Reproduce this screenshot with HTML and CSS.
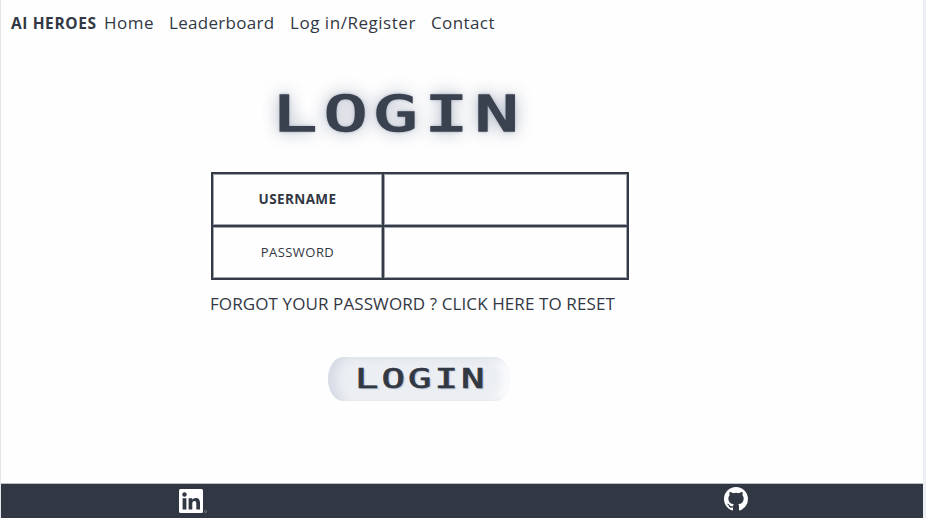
FILE: index.html
```html
<!DOCTYPE html>
<html lang="en">
<head>
<meta charset="utf-8">
<title>AI Heroes</title>
<link rel="stylesheet" href="styles.css">
</head>
<body>
<header class="nav">
  <a class="brand">AI HEROES</a>
  <a class="link home">Home</a>
  <a class="link board">Leaderboard</a>
  <a class="link register">Log in/Register</a>
  <a class="link contact">Contact</a>
</header>
<main class="main">
  <h1 class="title"><span>LOGIN</span></h1>
  <form class="form">
    <div class="fields">
      <label class="name">USERNAME</label><div class="field"></div>
      <label class="pass">PASSWORD</label><div class="field"></div>
    </div>
    <p class="forgot">FORGOT YOUR PASSWORD ? CLICK HERE TO RESET</p>
    <button class="submit" type="button"><span>LOGIN</span></button>
  </form>
</main>
<footer class="footer">
  <a class="linkedin">
    <svg width="29" height="26" viewBox="0 0 29 26"><rect x="0" y="0" width="24" height="24" rx="1.5" fill="#fff"/><g fill="#323843"><circle cx="5.5" cy="5.5" r="2.2"/><path d="M3.6 9.2h3.8V20.5H3.6zM9.6 9.2h3.6v1.6c.7-1.2 2-1.9 3.6-1.9 3.1 0 4.2 2 4.2 5.2v6.4h-3.7v-5.8c0-1.6-.4-2.7-1.9-2.7s-2.1 1.1-2.1 2.6v5.9H9.6z"/></g><circle cx="26.5" cy="22.5" r="1" fill="none" stroke="#8b9099" stroke-width=".8"/></svg>
  </a>
  <a class="github">
    <svg width="24" height="24" viewBox="0 0 16 16"><path fill="#fff" d="M8 0C3.58 0 0 3.58 0 8c0 3.54 2.29 6.53 5.47 7.59.4.07.55-.17.55-.38 0-.19-.01-.82-.01-1.49-2.01.37-2.53-.49-2.69-.94-.09-.23-.48-.94-.82-1.13-.28-.15-.68-.52-.01-.53.63-.01 1.08.58 1.23.82.72 1.21 1.87.87 2.33.66.07-.52.28-.87.51-1.07-1.78-.2-3.64-.89-3.64-3.95 0-.87.31-1.59.82-2.15-.08-.2-.36-1.02.08-2.12 0 0 .67-.21 2.2.82a7.6 7.6 0 0 1 4 0c1.53-1.04 2.2-.82 2.2-.82.44 1.1.16 1.92.08 2.12.51.56.82 1.27.82 2.15 0 3.07-1.87 3.75-3.65 3.95.29.25.54.73.54 1.48 0 1.07-.01 1.93-.01 2.2 0 .21.15.46.55.38A8 8 0 0 0 16 8c0-4.42-3.58-8-8-8z"/></svg>
  </a>
</footer>
</body>
</html>
```

FILE: styles.css
```css
* { box-sizing: border-box; }
body {
  margin: 0;
  height: 518px;
  display: flex;
  flex-direction: column;
  border-left: 1px solid #e5e5ec;
  border-right: 3px solid #ebeef2;
  background: #fefefe;
  color: #323843;
  font-family: "Open Sans", sans-serif;
  overflow: hidden;
}
.nav { display: flex; height: 46px; padding: 0 0 2px 10px; align-items: center; white-space: nowrap; }
.brand { width: 93px; padding-top: 2px; font-weight: 700; font-size: 15.5px; letter-spacing: .6px; }
.link { font-size: 17px; }
.home { width: 65px; letter-spacing: .5px; }
.board { width: 121px; letter-spacing: .3px; }
.register { width: 141px; letter-spacing: .53px; }
.contact { letter-spacing: .4px; }
.title, .submit { font-family: "DejaVu Sans Mono", monospace; font-weight: 400; }
.title {
  margin: 0 0 0 272px;
  height: 126px;
  padding-top: 39px;
  font-size: 49px;
  line-height: 60px;
  color: #3a424f;
}
.title span {
  display: inline-block;
  transform: scaleX(1.5);
  transform-origin: left;
  letter-spacing: 4.1px;
  -webkit-text-stroke: 1.6px #3a424f;
  text-shadow: 0 0 3px #7d869c, 0 0 14px #8f98ac;
}
.form { width: 419px; margin-left: 209px; }
.fields {
  display: grid;
  grid-template-columns: 169px 1fr;
  grid-template-rows: 51px 51px;
  gap: 2px;
  width: 418px;
  padding: 2px;
  margin-left: 1px;
  background: #343a46;
}
.fields > * { display: flex; align-items: center; justify-content: center; padding-bottom: 2px; background: #fefefe; box-shadow: inset 0 0 0 1px #a0a4ac; }
.name { font-size: 13.5px; font-weight: 700; letter-spacing: .4px; }
.pass { font-size: 13px; letter-spacing: .45px; }
.forgot { margin: 11px 0 0; height: 66px; font-size: 17px; line-height: 26px; letter-spacing: .1px; white-space: nowrap; }
.submit {
  display: block;
  width: 182px;
  height: 44px;
  margin-left: 118px;
  padding: 0 0 0 27px;
  border: 0;
  border-radius: 15px / 22px;
  background: #ebeef2;
  box-shadow: inset 8px 1px 8px #d7dbe5, inset -8px -1px 8px #fafbfd;
  color: #323843;
  text-align: left;
  font-size: 26px;
}
.submit span { display: inline-block; transform: scaleX(1.5); transform-origin: left; letter-spacing: 2px; -webkit-text-stroke: .7px #323843; text-shadow: 1px 1px 1px #aeb8ca; }
.footer { display: flex; height: 34px; margin-top: auto; background: #323843; box-shadow: 0 -1px #bcbfc4; }
.linkedin { width: 545px; margin-left: 178px; padding-top: 5px; }
.github { padding-top: 3px; }
.footer svg { display: block; }
```
